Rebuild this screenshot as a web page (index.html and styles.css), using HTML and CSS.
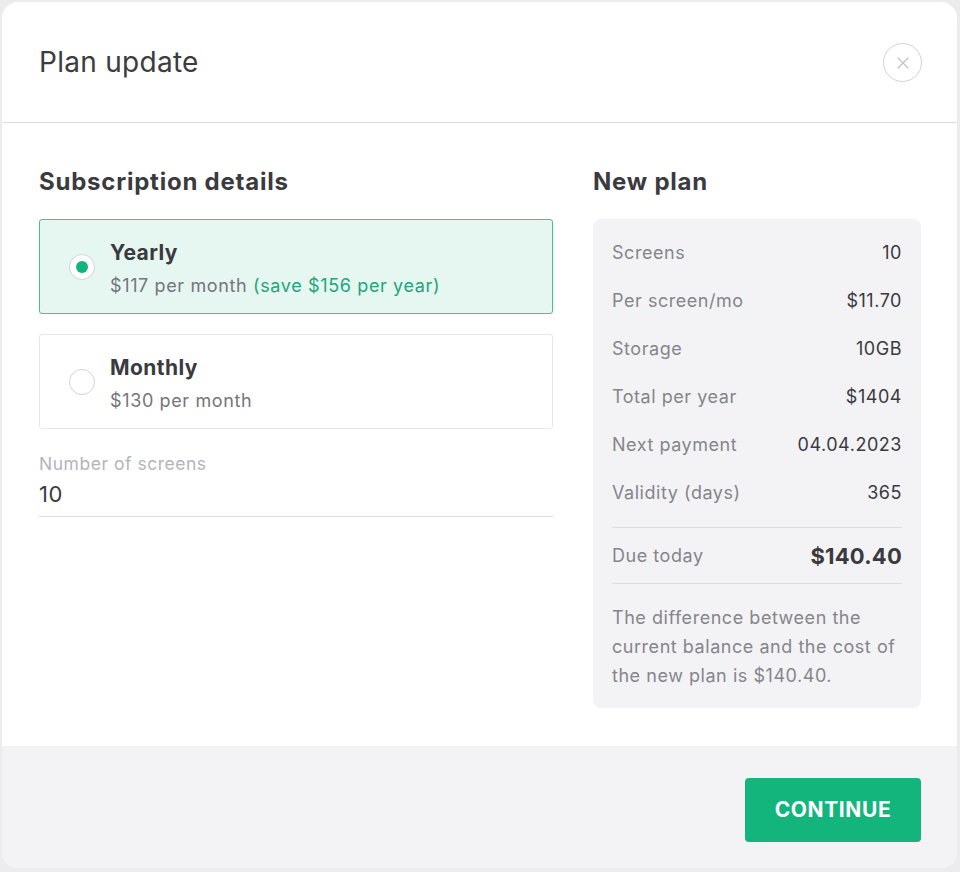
FILE: index.html
```html
<!DOCTYPE html>
<html lang="en">
<head>
<meta charset="utf-8">
<title>Plan update</title>
<link rel="stylesheet" href="styles.css">
</head>
<body>
<div class="modal">
  <header class="modal-header">
    <h1 class="modal-title">Plan update</h1>
    <button class="close-btn" aria-label="Close">
      <svg width="14" height="14" viewBox="0 0 14 14"><path d="M2 2 L12 12 M12 2 L2 12" stroke="#c4c4c8" stroke-width="1.4" fill="none" stroke-linecap="round"/></svg>
    </button>
  </header>
  <main class="modal-body">
    <section class="left-col">
      <h2 class="section-title">Subscription details</h2>
      <div class="option option-active">
        <span class="radio radio-checked"></span>
        <div class="option-text">
          <div class="option-name">Yearly</div>
          <div class="option-price">$117 per month <span class="save">(save $156 per year)</span></div>
        </div>
      </div>
      <div class="option">
        <span class="radio"></span>
        <div class="option-text">
          <div class="option-name">Monthly</div>
          <div class="option-price">$130 per month</div>
        </div>
      </div>
      <div class="field">
        <div class="field-label">Number of screens</div>
        <div class="field-value">10</div>
      </div>
    </section>
    <section class="right-col">
      <h2 class="section-title">New plan</h2>
      <div class="summary">
        <div class="row"><span class="row-label">Screens</span><span class="row-value">10</span></div>
        <div class="row"><span class="row-label">Per screen/mo</span><span class="row-value">$11.70</span></div>
        <div class="row"><span class="row-label">Storage</span><span class="row-value">10GB</span></div>
        <div class="row"><span class="row-label">Total per year</span><span class="row-value">$1404</span></div>
        <div class="row"><span class="row-label">Next payment</span><span class="row-value">04.04.2023</span></div>
        <div class="row"><span class="row-label">Validity (days)</span><span class="row-value">365</span></div>
        <div class="row row-due"><span class="row-label">Due today</span><span class="row-value due-value">$140.40</span></div>
        <p class="note">The difference between the current balance and the cost of the new plan is $140.40.</p>
      </div>
    </section>
  </main>
  <footer class="modal-footer">
    <button class="continue-btn">CONTINUE</button>
  </footer>
</div>
</body>
</html>
```

FILE: styles.css
```css
* { box-sizing: border-box; }
html, body { margin: 0; padding: 0; }
body {
  background: #ececee;
  font-family: Inter, "Noto Sans", sans-serif;
  color: #3a3a3f;
  width: 960px;
  height: 872px;
  overflow: hidden;
}
.modal {
  margin: 2px 3px 0 2px;
  height: 866px;
  background: #ffffff;
  border-radius: 16px;
  overflow: hidden;
  display: flex;
  flex-direction: column;
}
.modal-header {
  height: 121px;
  border-bottom: 1.5px solid #dcdce0;
  display: flex;
  align-items: center;
  justify-content: space-between;
  padding: 0 35px 0 37px;
  flex-shrink: 0;
}
.modal-title {
  margin: 0;
  font-size: 28px;
  font-weight: 400;
  color: #3b3b40;
  letter-spacing: 0.01em;
}
.close-btn {
  width: 39px;
  height: 39px;
  border-radius: 50%;
  border: 1.5px solid #d2d2d6;
  background: #fff;
  display: flex;
  align-items: center;
  justify-content: center;
  padding: 0;
  margin-top: 1px;
}
.modal-body {
  flex: 1;
  display: flex;
  gap: 40px;
  padding: 43px 36px 0 37px;
}
.left-col { width: 514px; }
.right-col { width: 328px; }
.section-title {
  margin: 0 0 22px;
  font-size: 24px;
  font-weight: 700;
  color: #3a3a3f;
  line-height: 31px;
  letter-spacing: 0.032em;
}
.option {
  height: 95px;
  border: 1.5px solid #e6e6ea;
  border-radius: 3px;
  display: flex;
  align-items: center;
  padding-left: 29px;
  margin-bottom: 20px;
  background: #fff;
}
.option-active {
  border-color: #45c38f;
  background: #e6f7f1;
}
.radio {
  width: 26px;
  height: 26px;
  border-radius: 50%;
  border: 1.5px solid #d4d4d8;
  background: #fff;
  flex-shrink: 0;
  display: flex;
  align-items: center;
  justify-content: center;
  margin-right: 15px;
}
.radio-checked::after {
  content: "";
  width: 12px;
  height: 12px;
  border-radius: 50%;
  background: #12b37c;
}
.option-text { margin-top: 6px; }
.option-name {
  font-size: 21px;
  font-weight: 700;
  color: #3a3a3f;
  line-height: 28px;
  letter-spacing: 0.02em;
  margin-top: -3px;
}
.option-price {
  font-size: 18px;
  color: #75757b;
  margin-top: 7px;
  line-height: 24px;
  letter-spacing: 0.035em;
}
.save { color: #22a57a; }
.field {
  padding-top: 3px;
  border-bottom: 1.5px solid #dcdce0;
  padding-bottom: 7px;
}
.field-label {
  font-size: 17.5px;
  color: #b4b4ba;
  line-height: 24px;
  letter-spacing: 0.03em;
}
.field-value {
  font-size: 22px;
  color: #3a3a3f;
  line-height: 30px;
  margin-top: 3px;
  letter-spacing: 0.02em;
}
.summary {
  background: #f3f3f5;
  border-radius: 8px;
  padding: 9px 19px 18px 19px;
  margin-top: 2px;
}
.row {
  display: flex;
  justify-content: space-between;
  align-items: center;
  height: 48px;
  font-size: 18px;
  letter-spacing: 0.03em;
}
.row-label { color: #85858b; }
.row-value { color: #3a3a3f; }
.row-due {
  border-top: 1.5px solid #dcdce0;
  border-bottom: 1.5px solid #dcdce0;
  height: 57px;
  margin-top: 11px;
}
.due-value {
  font-size: 22px;
  font-weight: 700;
  letter-spacing: 0.01em;
}
.note {
  margin: 19px 0 0;
  font-size: 18px;
  line-height: 29px;
  color: #85858b;
  letter-spacing: 0.03em;
}
.modal-footer {
  height: 122px;
  background: #f3f3f5;
  display: flex;
  align-items: center;
  justify-content: flex-end;
  padding: 0 36px 0 0;
  flex-shrink: 0;
}
.continue-btn {
  width: 176px;
  height: 64px;
  background: #13b57d;
  border: none;
  border-radius: 4px;
  color: #ffffff;
  font-family: Inter, "Noto Sans", sans-serif;
  font-size: 21px;
  font-weight: 700;
  letter-spacing: 0.6px;
  margin-top: 5px;
}
```
